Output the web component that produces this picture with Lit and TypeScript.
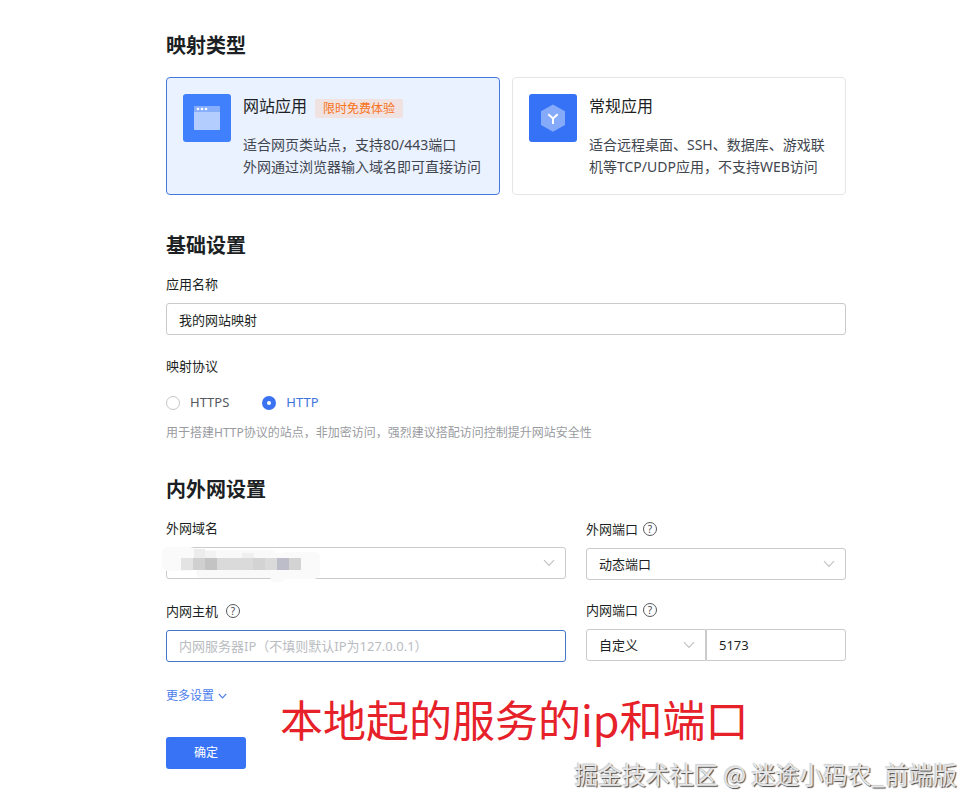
import { LitElement, html, css, svg } from "lit";
import { customElement, state } from "lit/decorators.js";
import { classMap } from "lit/directives/class-map.js";

const chevron = html`<svg class="chevron" viewBox="0 0 12 8" aria-hidden="true">
  <path d="M1 1.2 6 6.4 11 1.2" />
</svg>`;

// Cells of the pixelated domain value: x, y, width, height, colour.
const mosaic: [number, number, number, number, string][] = [
  [0, 0, 34, 24, "#fafafa"],
  [34, 3, 80, 28, "#f9f9f9"],
  [32, 2, 11, 9, "#ececec"],
  [43, 4, 11, 7, "#f2f2f2"],
  [80, 6, 12, 5, "#f0f0f0"],
  [108, 6, 16, 29, "#fafafa"],
  [118, 5, 40, 27, "#fafafa"],
  [19, 11, 12, 12, "#e3e3e3"],
  [31, 11, 12, 12, "#d0d0d0"],
  [43, 11, 12, 12, "#c3c3c3"],
  [55, 11, 36, 12, "#dadada"],
  [91, 11, 12, 12, "#d3d3d3"],
  [103, 11, 12, 12, "#dadada"],
  [115, 11, 12, 12, "#bdbdca"],
  [127, 11, 12, 12, "#d3d3d3"],
];

@customElement("app-root")
export class AppRoot extends LitElement {
  @state() private kind = "web";
  @state() private protocol = "http";
  @state() private expanded = false;

  static styles = css`
    :host {
      display: block;
      position: relative;
      color: #1c1f23;
      font-family: "Noto Sans", "Noto Sans CJK SC", sans-serif;
      font-size: 13px;
      line-height: 22px;
    }
    * {
      box-sizing: border-box;
    }
    form {
      padding: 32px 133px 42px 166px;
    }
    h2 {
      margin: 0 0 13px;
      font-size: 20px;
      line-height: 28px;
      font-weight: 700;
    }
    section {
      margin-bottom: 32px;
    }
    .types {
      margin-bottom: 37px;
    }
    .types h2 {
      margin-bottom: 17px;
    }
    .cards {
      display: grid;
      grid-template-columns: 1fr 1fr;
      gap: 12px;
    }
    .card {
      display: flex;
      gap: 12px;
      padding: 16px;
      border: 1px solid #e4e5e7;
      border-radius: 4px;
      cursor: pointer;
    }
    .card.on {
      background: #eaf1ff;
      border-color: #4378dc;
    }
    .card input {
      position: absolute;
      opacity: 0;
      width: 1px;
      height: 1px;
      margin: 0;
    }
    .tile {
      flex: none;
      width: 48px;
      height: 48px;
    }
    .title {
      display: flex;
      align-items: flex-end;
      gap: 8px;
      height: 24px;
      font-size: 16px;
      line-height: 24px;
    }
    .tag {
      padding: 0 8px;
      border-radius: 2px;
      background: #f0e2e1;
      color: #fa7319;
      font-size: 12px;
      line-height: 19px;
    }
    .desc {
      margin-top: 16px;
      color: #41464f;
      font-size: 14px;
      line-height: 22px;
    }
    .line {
      display: block;
    }
    .field {
      display: flex;
      flex-direction: column;
      gap: 8px;
    }
    .caption {
      display: flex;
      align-items: center;
      gap: 8px;
    }
    .ports .caption {
      gap: 5px;
    }
    .help {
      width: 14px;
      height: 14px;
      padding: 0;
      border: 1px solid #55585c;
      border-radius: 50%;
      background: none;
      color: #44474b;
      font: 10px/12px "Noto Sans", sans-serif;
      text-align: center;
    }
    .caption.assisted {
      height: 23px;
    }
    .box {
      display: block;
      width: 100%;
      height: 32px;
      margin: 0;
      padding: 0 12px;
      border: 1px solid #c9cacc;
      border-radius: 3px;
      background: #fff;
      color: #1c1f23;
      font: inherit;
      outline: none;
      appearance: none;
    }
    .box::placeholder {
      color: #b9bcc1;
      opacity: 1;
    }
    .box.active {
      border-color: #4378c8;
    }
    .picker {
      position: relative;
    }
    .picker .chevron {
      position: absolute;
      right: 11px;
      top: 12px;
      width: 12px;
      height: 8px;
      pointer-events: none;
    }
    .chevron {
      fill: none;
      stroke: #bfc1c4;
      stroke-width: 1.1;
    }
    .mosaic {
      position: absolute;
      left: -4px;
      top: 0;
      width: 164px;
      height: 36px;
      pointer-events: none;
    }
    fieldset {
      margin: 20px 0 0;
      padding: 0;
      border: 0;
    }
    legend {
      padding: 0;
    }
    .choices {
      display: flex;
      gap: 33px;
      margin-top: 14px;
    }
    .choice {
      display: flex;
      align-items: center;
      gap: 10px;
      color: #55585d;
    }
    .choice.on {
      color: #3f74e0;
    }
    .choice input {
      appearance: none;
      width: 14px;
      height: 14px;
      margin: 2px 0 0;
      border: 1px solid #c4c5c7;
      border-radius: 50%;
      background: #fff;
    }
    .choice input:checked {
      border: 5px solid #3a72f2;
    }
    .hint {
      margin: 9px 0 0;
      color: #999b9f;
      font-size: 12px;
    }
    .network {
      display: grid;
      grid-template-columns: 20fr 13fr;
      gap: 20px;
    }
    .column {
      display: flex;
      flex-direction: column;
      gap: 20px;
    }
    .column.ports {
      gap: 18px;
    }
    .pair {
      display: grid;
      grid-template-columns: 6fr 7fr;
    }
    .pair .picker .box {
      border-radius: 3px 0 0 3px;
    }
    .pair > .box {
      border-radius: 0 3px 3px 0;
    }
    .actions {
      display: flex;
      flex-direction: column;
      align-items: flex-start;
      gap: 30px;
    }
    .last {
      margin-bottom: 23px;
    }
    .more {
      display: flex;
      align-items: center;
      gap: 4px;
      padding: 0;
      border: 0;
      background: none;
      color: #4a7cec;
      font: inherit;
      font-size: 12px;
    }
    .more .chevron {
      width: 9px;
      height: 6px;
      stroke: #4a7cec;
      stroke-width: 1.6;
    }
    .submit {
      width: 80px;
      height: 32px;
      padding: 0;
      border: 0;
      border-radius: 3px;
      background: #3873f5;
      color: #fff;
      font: inherit;
      font-size: 12px;
    }
    .note,
    .credit {
      position: absolute;
      margin: 0;
      font-family: "Noto Sans CJK SC", sans-serif;
      white-space: nowrap;
      pointer-events: none;
    }
    .note {
      left: 280px;
      top: 687px;
      color: #e6212a;
      font-size: 43px;
      line-height: 62px;
    }
    .credit {
      right: 22px;
      top: 756px;
      color: #e6e6e6;
      font-size: 24px;
      line-height: 36px;
      text-shadow: 1px 1px 1px #444, -1px -1px 1px #ccc;
    }
  `;

  private card(id: string, title: string, tag: string, lines: string[], icon: unknown) {
    return html`<label class=${classMap({ card: true, on: this.kind === id })}>
      <input
        type="radio"
        name="kind"
        .checked=${this.kind === id}
        @change=${() => (this.kind = id)}
      />
      <svg class="tile" viewBox="0 0 48 48" aria-hidden="true">
        <rect width="48" height="48" rx="3" fill=${id === "web" ? "#4080fc" : "#3672f6"} />
        ${icon}
      </svg>
      <span>
        <span class="title">${title}${tag ? html`<span class="tag">${tag}</span>` : ""}</span>
        <span class="line desc">${lines.map((l) => html`<span class="line">${l}</span>`)}</span>
      </span>
    </label>`;
  }

  private choice(id: string, text: string) {
    return html`<label class=${classMap({ choice: true, on: this.protocol === id })}>
      <input
        type="radio"
        name="protocol"
        .checked=${this.protocol === id}
        @change=${() => (this.protocol = id)}
      />${text}
    </label>`;
  }

  private caption(target: string, text: string, help = true) {
    return html`<div class=${classMap({ caption: true, assisted: help })}>
      <label for=${target}>${text}</label>
      ${help
        ? html`<button class="help" type="button" aria-label="${text}说明">?</button>`
        : ""}
    </div>`;
  }

  render() {
    const windowIcon = svg`
      <rect x="11" y="12" width="26" height="24" rx="1" fill="#86aefd" />
      <rect x="11" y="18" width="26" height="18" rx="1" fill="#b3cdfe" />
      <circle cx="15" cy="15" r="1.3" fill="#fff" />
      <circle cx="19" cy="15" r="1.3" fill="#fff" />
      <circle cx="23" cy="15" r="1.3" fill="#fff" />`;
    const hexIcon = svg`
      <path d="M24 10.5 36 17.2V31L24 37.8 12 31V17.2Z" fill="#86aafa" />
      <path d="M19.3 20.2 24 24.4 28.7 20.2M24 24.4V30" fill="none" stroke="#fff" stroke-width="2" />`;

    return html`
      <form @submit=${(e: Event) => e.preventDefault()}>
        <section class="types">
          <h2>映射类型</h2>
          <div class="cards">
            ${this.card("web", "网站应用", "限时免费体验", ["适合网页类站点，支持80/443端口", "外网通过浏览器输入域名即可直接访问"], windowIcon)}
            ${this.card("general", "常规应用", "", ["适合远程桌面、SSH、数据库、游戏联", "机等TCP/UDP应用，不支持WEB访问"], hexIcon)}
          </div>
        </section>

        <section>
          <h2>基础设置</h2>
          <div class="field">
            ${this.caption("name", "应用名称", false)}
            <input class="box" id="name" type="text" value="我的网站映射" />
          </div>
          <fieldset>
            <legend>映射协议</legend>
            <div class="choices">${this.choice("https", "HTTPS")}${this.choice("http", "HTTP")}</div>
            <p class="hint">用于搭建HTTP协议的站点，非加密访问，强烈建议搭配访问控制提升网站安全性</p>
          </fieldset>
        </section>

        <section class="last">
          <h2>内外网设置</h2>
          <div class="network">
            <div class="column">
              <div class="field">
                ${this.caption("domain", "外网域名", false)}
                <div class="picker">
                  <select class="box" id="domain"><option></option></select>
                  ${chevron}
                  <svg class="mosaic" viewBox="0 0 164 36" aria-hidden="true">
                    ${mosaic.map(
                      ([x, y, w, h, c]) =>
                        svg`<rect x=${x} y=${y} width=${w} height=${h} rx=${h > 12 ? 6 : 0} fill=${c} />`
                    )}
                  </svg>
                </div>
              </div>
              <div class="field">
                ${this.caption("host", "内网主机")}
                <input class="box active" id="host" type="text" placeholder="内网服务器IP（不填则默认IP为127.0.0.1）" />
              </div>
            </div>
            <div class="column ports">
              <div class="field">
                ${this.caption("outer-port", "外网端口")}
                <div class="picker">
                  <select class="box" id="outer-port"><option>动态端口</option></select>
                  ${chevron}
                </div>
              </div>
              <div class="field">
                ${this.caption("inner-port", "内网端口")}
                <div class="pair">
                  <div class="picker">
                    <select class="box" aria-label="端口类型"><option>自定义</option></select>
                    ${chevron}
                  </div>
                  <input class="box" id="inner-port" type="text" value="5173" />
                </div>
              </div>
            </div>
          </div>
        </section>

        <div class="actions">
          <button
            class="more"
            type="button"
            aria-expanded=${this.expanded}
            @click=${() => (this.expanded = !this.expanded)}
          >
            更多设置${chevron}
          </button>
          <button class="submit" type="submit">确定</button>
        </div>
      </form>
      <p class="note">本地起的服务的ip和端口</p>
      <p class="credit">掘金技术社区 @ 迷途小码农_前端版</p>
    `;
  }
}
